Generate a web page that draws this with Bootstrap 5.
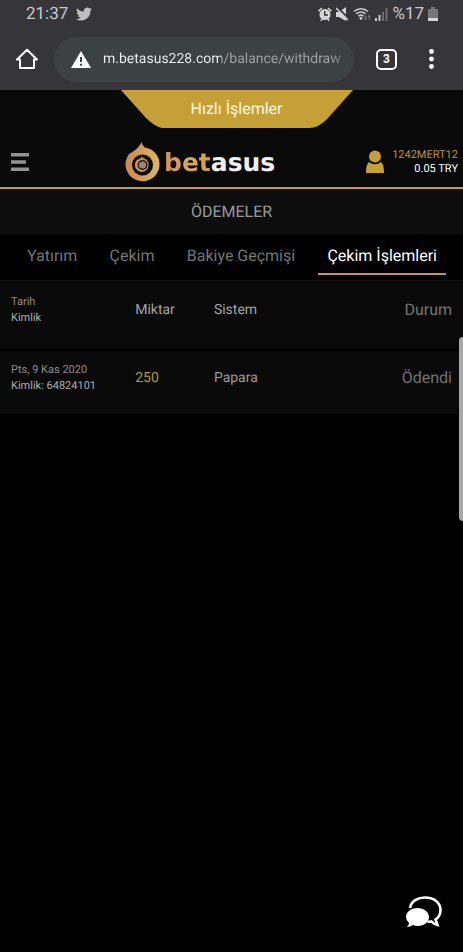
<!DOCTYPE html>
<html lang="tr" data-bs-theme="dark">
<head>
<meta charset="utf-8">
<meta name="viewport" content="width=device-width, initial-scale=1">
<title>Çekim İşlemleri</title>
<link href="https://cdn.jsdelivr.net/npm/bootstrap@5.3.0/dist/css/bootstrap.min.css" rel="stylesheet">
<style>
body{background:#000;font-family:Roboto,"Noto Sans",sans-serif;font-size:16px;line-height:20px;color:#8c8c8c;text-rendering:geometricPrecision}
.phone-bar{background:#36363a;color:#c8c8c9}
.status-row{height:28px;padding:0 25px 0 26px;font-size:17px}
.url-row{height:62px;padding:0 29px 0 16px}
.plain-btn{background:none;border:0;padding:0;line-height:0;color:#fff}
.url-pill{background:#3c4144;height:45px;padding:0 10px 0 17px;margin:0 22px 0 16px}
.url-input{font-size:14px;line-height:20px;border:0;padding:0;outline:0;min-width:0;color:transparent;text-rendering:geometricPrecision;
 background:linear-gradient(90deg,#f1f1f2 118px,#a0a3a5 118px,#a0a3a5 calc(100% - 14px),#66696b) text;-webkit-background-clip:text;background-clip:text}
.tab-count{width:21px;height:21px;border:2px solid #fff;border-radius:5px;font-size:12px;line-height:17px;font-weight:700}
.more-btn{padding-left:32px}
.site-head{background:#090909;border-bottom:2px solid #bf9b52}
.quick-link{position:relative;width:232px;height:38px;font-size:16px;line-height:37px;color:#fff8e4;isolation:isolate;margin-left:10px}
.quick-link svg{position:absolute;inset:0;z-index:-1}
.head-row{height:59px;padding:8px 5px 0 11px}
.head-menu{width:25.5%}
.head-menu .plain-btn{padding-top:2px}
.brand-word{font-family:"DejaVu Sans",sans-serif;font-weight:700;font-size:25px;line-height:28px;padding-top:2px;color:#f0f0f0}
.brand-word span{background:linear-gradient(90deg,#d29056,#d9a85a 60%,#c9a23c);-webkit-background-clip:text;background-clip:text;color:transparent}
.account{font-size:11px;line-height:14px;color:#fff}
.account-name{color:#b99634}
.page-title{background:#0d0d0d;height:46px;font-size:16px;line-height:45px;color:#999;border-bottom:1px solid #060606}
.tab-strip{height:46px;padding:0 17px 0 18px;border-bottom:1px solid #111}
.tab-strip .nav-link{padding:11px 9px 7px;line-height:20px;color:#757575;border-bottom:2px solid transparent}
.tab-strip .nav-link.active{color:#fff;border-color:#bf9b52}
.pay-table{table-layout:fixed;font-size:14px;line-height:20px}
.pay-table th,.pay-table td{background:#090909;font-weight:400;padding:19px 0 0;height:68px;color:#999;vertical-align:top}
.pay-table th{border-bottom:3px solid #020202;color:#a3a3a3}
.pay-table td{border-top:1px solid #151515;height:65px;padding-top:17px}
.pay-table tr>:first-child{width:29.2%;padding:13px 0 0 11px;font-size:11px;line-height:16px;color:#8c8c8c}
.pay-table td:first-child{padding-top:11px}
.pay-table .id-line{color:#adadad}
.pay-table tr>:nth-child(2){width:17%}
.pay-table td.amount{color:#b6982f}
.pay-table tr>:last-child{padding-right:11px;font-size:16px;color:#747474}
.edge-handle{position:fixed;right:0;top:337px;width:4px;height:184px;background:#a8a8a8;border-radius:4px 0 0 4px}
.chat-btn{position:fixed;right:20px;bottom:22px}
</style>
</head>
<body>
<div class="phone-bar">
 <div class="status-row d-flex align-items-center justify-content-between">
  <div class="d-flex align-items-center"><span>21:37</span>
   <svg class="ms-2" width="16" height="16" viewBox="0 0 24 24" fill="#bfbfc0"><path d="M24 4.6a10 10 0 0 1-2.8.8 5 5 0 0 0 2.1-2.7 10 10 0 0 1-3.1 1.2 4.9 4.9 0 0 0-8.4 4.5A14 14 0 0 1 1.700 3.200a4.900 4.900 0 0 0 1.500 6.600 4.900 4.900 0 0 1-2.200-.6 4.900 4.900 0 0 0 3.900 4.900 5 5 0 0 1-2.200.1 4.900 4.900 0 0 0 4.600 3.400A9.900 9.900 0 0 1 0 19.500a14 14 0 0 0 21.500-12.400A10 10 0 0 0 24 4.600z"/></svg>
  </div>
  <div class="d-flex align-items-center">
   <svg width="14" height="14" viewBox="0 0 14 14" fill="#d5d5d6"><circle cx="7" cy="7.500" r="5.500"/><path d="M0 3.500L3.500.5l1 1L1 4.700zM14 3.500L10.500.5l-1 1L13 4.700zM2 14l2-3 1 1-1.500 2zM12 14l-2-3-1 1 1.500 2z"/><path d="M6.700 4v4h3.300" fill="none" stroke="#36363a" stroke-width="1.400"/></svg>
   <svg class="ms-1" width="13" height="14" viewBox="0 0 13 14"><path d="M0 5h3l7-5v14L3 10H0z" fill="#d5d5d6"/><path d="M1 0l12 12" stroke="#36363a" stroke-width="2"/><path d="M0 1l12 12" stroke="#d5d5d6" stroke-width="1.500"/></svg>
   <svg class="ms-1" width="18" height="14" viewBox="0 0 18 14" fill="none" stroke="#c8c8c9" stroke-width="1.500"><path d="M1 4.500a10 10 0 0 1 14 0M3.300 7a6.700 6.700 0 0 1 9.400 0M5.500 9.300a3.700 3.700 0 0 1 5 0"/><circle cx="8" cy="11.300" r=".8" fill="#c8c8c9"/><path d="M12.500 8.500v4m-1.300-1.500l1.300 1.500 1.300-1.500M16 12.500v-4m-1.300 1.500L16 8.500l1.300 1.500" stroke="#8a8a8d" stroke-width=".8"/></svg>
   <svg class="ms-1" width="13" height="13" viewBox="0 0 13 13"><path d="M0 10h2v3H0zM3.500 7h2v6h-2z" fill="#c8c8c9"/><path d="M7 4h2v9H7zM10.500 0h2v13h-2z" fill="#6d6d70"/></svg>
   <span class="ms-1">%17</span>
   <svg class="ms-1" width="10" height="14" viewBox="0 0 10 14"><path d="M3 0h4v2h3v10H0V2h3z" fill="#77777a"/><path d="M0 11h10v3H0z" fill="#d5d5d6"/></svg>
  </div>
 </div>
 <div class="url-row d-flex align-items-center">
  <button class="plain-btn" aria-label="Ana sayfa"><svg width="22" height="22" viewBox="0 0 22 22" fill="none" stroke="#fff" stroke-width="2"><path d="M1 11.500h3V20h14v-8.500h3L11 1.800z" stroke-linejoin="round"/></svg></button>
  <div class="url-pill rounded-pill d-flex align-items-center flex-grow-1">
   <svg class="flex-shrink-0 me-2" width="20" height="17" viewBox="0 0 20 17"><path d="M10 0l10 17H0z" fill="#fff"/><path d="M10 6v5M10 12.700v2" stroke="#3c4144" stroke-width="2"/></svg>
   <input class="url-input flex-grow-1 ms-1" aria-label="Adres" value="m.betasus228.com/balance/withdraw">
  </div>
  <button class="plain-btn tab-count" aria-label="3 açık sekme">3</button>
  <button class="plain-btn more-btn" aria-label="Menü"><svg width="5" height="20" viewBox="0 0 5 20" fill="#fff"><circle cx="2.500" cy="2.500" r="2.400"/><circle cx="2.500" cy="10" r="2.400"/><circle cx="2.500" cy="17.500" r="2.400"/></svg></button>
 </div>
</div>
<header class="site-head">
 <div class="d-flex justify-content-center"><a class="quick-link text-center text-decoration-none" href="#">Hızlı İşlemler<svg width="232" height="38" viewBox="0 0 232 38"><path d="M0 0h232l-25 28q-9 10-19 10H41q-8-2-16-10z" fill="#c4a037"/></svg></a></div>
 <div class="head-row d-flex align-items-center">
  <div class="head-menu"><button class="plain-btn" aria-label="Menüyü aç"><svg width="18" height="18" viewBox="0 0 18 18" fill="#939393"><path d="M0 0h18v3.500H0zM0 7.200h15v3.500H0zM0 14.400h18v3.500H0z"/></svg></button></div>
  <a href="#" class="d-flex align-items-center text-decoration-none" aria-label="betasus">
   <svg width="35" height="41" viewBox="0 0 35 41"><defs><linearGradient id="ring" x2="1"><stop stop-color="#cf8550"/><stop offset="1" stop-color="#d9b662"/></linearGradient></defs><path d="M17 0q-1 4 3 6.500A17 17 0 1 1 4 13Q15 7 17 0z" fill="url(#ring)"/><circle cx="17.500" cy="24" r="10.500" fill="#090909"/><path d="M17 15q0 2 2 2.300a7 7 0 1 1-7 1.500q4-1 5-3.800z" fill="#c99050"/><circle cx="17.500" cy="24" r="5" fill="#28170f"/><circle cx="17.500" cy="24" r="3.600" fill="#94877c"/></svg>
   <span class="brand-word ms-1"><span>bet</span>asus</span>
  </a>
  <a href="#" class="ms-auto d-flex align-items-center justify-content-end text-decoration-none account">
   <svg class="me-2" width="18" height="24" viewBox="0 0 18 24" fill="#c4a037"><circle cx="9" cy="6.500" r="6"/><path d="M3 12q6 4.500 12 0 3 2 3 11H0q0-9 3-11z"/></svg>
   <span class="text-end"><span class="account-name d-block">1242MERT12</span>0.05 TRY</span>
  </a>
 </div>
</header>
<h1 class="page-title text-center m-0 fw-normal">ÖDEMELER</h1>
<nav class="nav tab-strip flex-nowrap align-items-start justify-content-between text-nowrap">
 <a class="nav-link" href="#">Yatırım</a><a class="nav-link" href="#">Çekim</a><a class="nav-link" href="#">Bakiye Geçmişi</a><a class="nav-link active" aria-current="page" href="#">Çekim İşlemleri</a>
</nav>
<table class="pay-table w-100">
 <thead><tr><th><span class="d-block">Tarih</span><span class="d-block id-line">Kimlik</span></th><th>Miktar</th><th>Sistem</th><th class="text-end">Durum</th></tr></thead>
 <tbody><tr><td><span class="d-block">Pts, 9 Kas 2020</span><span class="d-block id-line">Kimlik: 64824101</span></td><td class="amount">250</td><td>Papara</td><td class="text-end">Ödendi</td></tr></tbody>
</table>
<div class="edge-handle"></div>
<button class="plain-btn chat-btn" aria-label="Canlı destek"><svg width="38" height="34" viewBox="0 0 38 34"><path d="M5 12C6 5 13 1.500 20 1.500c9 0 15.500 5 15.500 12.500 0 4-2 7.500-5 9.500l2 5.500q-4-1-6-3.500l-4 .5" fill="none" stroke="#fff" stroke-width="2.600"/><path d="M12.500 12C19 12 24 16 24 21s-5 9-11 9q-3 0-5-1-3 2-6 2 2-2 2-4Q1 24.500 1 21c0-5 5-9 11.500-9z" fill="#fff"/></svg></button>
<script src="https://cdn.jsdelivr.net/npm/bootstrap@5.3.0/dist/js/bootstrap.bundle.min.js"></script>
</body>
</html>
